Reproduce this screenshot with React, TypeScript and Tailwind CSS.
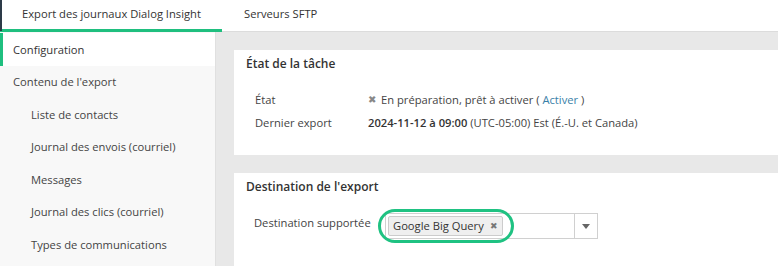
import React from "react";

const subItems = [
  "Liste de contacts",
  "Journal des envois (courriel)",
  "Messages",
  "Journal des clics (courriel)",
  "Types de communications",
];

export default function App() {
  return (
    <div
      className="w-[778px] h-[266px] overflow-hidden bg-white text-[#444] text-[11.2px] flex flex-col"
      style={{ fontFamily: '"Open Sans", "Noto Sans", sans-serif' }}
    >
      {/* Tab bar */}
      <div className="h-[32px] shrink-0 flex border-b border-[#dcdcdc] bg-white relative">
        <div className="absolute left-0 top-0 w-[2px] h-[31px] bg-[#2d3b48]" />
        <div className="w-[222px] flex items-center pl-[22px] border-b-[3px] border-[#1fbf7f] -mb-px text-[#333]">
          Export des journaux Dialog Insight
        </div>
        <div className="flex items-center pl-[22px] pb-[2px] text-[#333]">Serveurs SFTP</div>
      </div>

      <div className="flex flex-1 min-h-0">
        {/* Sidebar */}
        <div className="w-[216px] shrink-0 bg-[#f8f8f8] border-r border-[#e0e0e0] flex flex-col pt-[1px]">
          <div className="h-[32.5px] flex items-center pt-[2px] pl-[10px] bg-white border-l-[3px] border-[#1fbf7f] text-[#333]">
            Configuration
          </div>
          <div className="h-[32.5px] flex items-center pt-[2px] pl-[13px]">Contenu de l'export</div>
          {subItems.map((s) => (
            <div key={s} className="h-[32.5px] flex items-center pt-[2px] pl-[31px]">
              {s}
            </div>
          ))}
        </div>

        {/* Main */}
        <div className="flex-1 bg-[#e8e8e8] pl-[18px] pt-[18px] flex flex-col gap-[18px]">
          <div className="bg-white h-[105px] shrink-0 px-[12px] pt-[5px]">
            <div className="text-[12px] font-semibold text-[#333] h-[18px] leading-[18px]">
              État de la tâche
            </div>
            <div className="mt-[18px] pl-[9px] flex flex-col gap-[5px]">
              <div className="flex h-[18px] items-center">
                <div className="w-[113px]">État</div>
                <div className="flex items-center">
                  <span className="text-[#888] text-[10px] w-[13px]">✖</span>
                  <span>
                    En préparation, prêt à activer ({" "}
                    <span className="text-[#3a7fa8]">Activer</span> )
                  </span>
                </div>
              </div>
              <div className="flex h-[18px] items-center">
                <div className="w-[113px]">Dernier export</div>
                <div>
                  <span className="font-semibold text-[#333]">2024-11-12 à 09:00</span> (UTC-05:00) Est
                  (É.-U. et Canada)
                </div>
              </div>
            </div>
          </div>

          <div className="bg-white flex-1 px-[12px] pt-[5px]">
            <div className="text-[12px] font-semibold text-[#333] h-[18px] leading-[18px]">
              Destination de l'export
            </div>
            <div className="mt-[17px] pl-[8px] flex items-start">
              <div className="w-[131px] pt-[2px]">Destination supportée</div>
              <div className="relative w-[213px] h-[26px] border border-[#d0d0d0] flex">
                <div className="flex-1 flex items-center pl-[2px]">
                  <div className="h-[20px] flex items-center px-[4px] bg-[#efefef] border border-[#ccc] rounded-[2px] text-[#333]">
                    Google Big Query
                    <span className="ml-[6px] text-[#777] text-[9px]">✖</span>
                  </div>
                </div>
                <div className="w-[23px] border-l border-[#d0d0d0] flex items-center justify-center">
                  <svg width="8" height="5" viewBox="0 0 8 5">
                    <path d="M0 0 L8 0 L4 5 Z" fill="#666" />
                  </svg>
                </div>
                <div className="absolute left-[-8px] top-[-5px] w-[136px] h-[34px] rounded-[17px] border-[3px] border-[#1fc282]" />
              </div>
            </div>
          </div>
        </div>
      </div>
    </div>
  );
}
